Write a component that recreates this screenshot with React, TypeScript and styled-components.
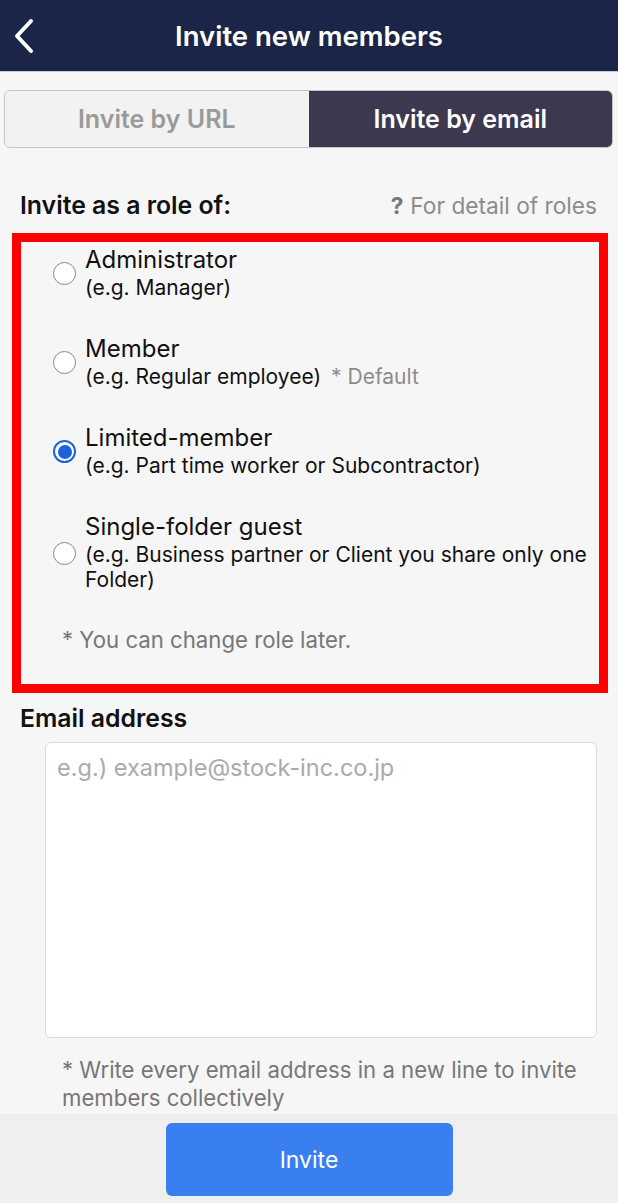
import styled, { createGlobalStyle } from 'styled-components';

const GlobalStyle = createGlobalStyle`
    html, body {
        margin: 0;
        padding: 0;
        background: #f6f6f6;
        font-family: Inter, Roboto, "Liberation Sans", sans-serif;
    }
`;

const Page = styled.div`
    width: 618px;
    height: 1203px;
    display: flex;
    flex-direction: column;
    background: #f6f6f6;
    overflow: hidden;
`;

const Header = styled.header`
    height: 72px;
    flex-shrink: 0;
    background: #1b2547;
    border-bottom: 1px solid #c9ccd4;
    box-sizing: border-box;
    display: flex;
    align-items: center;
    justify-content: center;
    position: relative;
    color: #fff;
    font-size: 27.5px;
    font-weight: 600;
`;

const BackButton = styled.div`
    position: absolute;
    left: 12px;
    top: 18px;
    width: 24px;
    height: 36px;
    display: flex;
`;

const Content = styled.main`
    flex: 1;
    display: flex;
    flex-direction: column;
    padding-top: 18px;
`;

const Segmented = styled.div`
    display: flex;
    height: 58px;
    margin: 0 5px 0 4px;
    border-radius: 6px;
    overflow: hidden;
    border: 1.5px solid #c4c4c4;
    box-sizing: border-box;
`;

const Segment = styled.div<{ $active?: boolean }>`
    flex: 1;
    display: flex;
    align-items: center;
    justify-content: center;
    font-size: 25px;
    font-weight: 600;
    background: ${p => (p.$active ? '#3c384f' : '#f2f2f2')};
    color: ${p => (p.$active ? '#fff' : '#9a9a9a')};
`;

const SectionHead = styled.div`
    display: flex;
    justify-content: space-between;
    align-items: center;
    height: 30px;
    padding: 0 21px 0 20px;
    margin-top: 42px;
`;

const Label = styled.div`
    font-size: 24.8px;
    line-height: 30px;
    font-weight: 600;
    color: #111;
`;

const DetailLink = styled.div`
    font-size: 22.7px;
    color: #8c8c8c;
    display: flex;
    align-items: center;
    gap: 7px;
    span {
        font-weight: 700;
        color: #777;
    }
`;

const RoleBox = styled.div`
    margin: 13px 10px 0 12px;
    border: 9px solid #ff0000;
    padding: 3px 4px 30px 32px;
    display: flex;
    flex-direction: column;
`;

const RoleRow = styled.label`
    display: flex;
    align-items: flex-start;
    gap: 9px;
    padding-bottom: 34px;
`;

const Radio = styled.span<{ $checked?: boolean; $offset: number }>`
    flex-shrink: 0;
    width: 23px;
    height: 23px;
    box-sizing: border-box;
    border-radius: 50%;
    border: ${p => (p.$checked ? '2px solid #1a62d8' : '1.5px solid #8a8a8a')};
    background: #fff;
    margin-top: ${p => p.$offset}px;
    display: flex;
    align-items: center;
    justify-content: center;
    &::after {
        content: '';
        display: ${p => (p.$checked ? 'block' : 'none')};
        width: 14px;
        height: 14px;
        border-radius: 50%;
        background: #1a62d8;
    }
`;

const RoleText = styled.div`
    display: flex;
    flex-direction: column;
    color: #111;
`;

const RoleTitle = styled.div`
    font-size: 24px;
    line-height: 30px;
`;

const RoleSub = styled.div`
    font-size: 21px;
    line-height: 25px;
`;

const Muted = styled.span`
    color: #8c8c8c;
    margin-left: 10px;
`;

const Note = styled.div<{ $indent: number }>`
    font-size: 22.2px;
    line-height: 28px;
    color: #777;
    padding-left: ${p => p.$indent}px;
`;

const EmailLabel = styled(Label)`
    margin: 10px 0 0 20px;
`;

const EmailBox = styled.textarea`
    margin: 9px 21px 0 45px;
    height: 296px;
    box-sizing: border-box;
    resize: none;
    border: 1.5px solid #dcdcdc;
    border-radius: 6px;
    background: #fff;
    padding: 10px 11px;
    font-family: inherit;
    font-size: 23.5px;
    line-height: 29px;
    color: #111;
    outline: none;
    &::placeholder {
        color: #aaa;
    }
`;

const HintWrap = styled.div`
    margin-top: 18px;
`;

const Footer = styled.footer`
    height: 89px;
    flex-shrink: 0;
    background: #efefef;
    display: flex;
    justify-content: center;
    padding-top: 9px;
    box-sizing: border-box;
`;

const InviteButton = styled.button`
    width: 287px;
    height: 73px;
    border: none;
    border-radius: 6px;
    background: #3a7ff0;
    color: #fff;
    font-family: inherit;
    font-size: 23px;
`;

const roles = [
    { title: 'Administrator', sub: '(e.g. Manager)', offset: 17 },
    { title: 'Member', sub: '(e.g. Regular employee)', extra: '* Default', offset: 17 },
    { title: 'Limited-member', sub: '(e.g. Part time worker or Subcontractor)', offset: 17, checked: true },
    {
        title: 'Single-folder guest',
        sub: '(e.g. Business partner or Client you share only one Folder)',
        offset: 30,
    },
];

const App = () => {
    return (
        <Page>
            <GlobalStyle />
            <Header>
                <BackButton>
                    <svg width="24" height="36" viewBox="0 0 24 36">
                        <path d="M19 3 L5 18 L19 33" fill="none" stroke="#fff" strokeWidth="4" strokeLinecap="round" strokeLinejoin="round" />
                    </svg>
                </BackButton>
                Invite new members
            </Header>
            <Content>
                <Segmented>
                    <Segment>Invite by URL</Segment>
                    <Segment $active>Invite by email</Segment>
                </Segmented>
                <SectionHead>
                    <Label>Invite as a role of:</Label>
                    <DetailLink>
                        <span>?</span>For detail of roles
                    </DetailLink>
                </SectionHead>
                <RoleBox>
                    {roles.map(r => (
                        <RoleRow key={r.title}>
                            <Radio $checked={r.checked} $offset={r.offset} />
                            <RoleText>
                                <RoleTitle>{r.title}</RoleTitle>
                                <RoleSub>
                                    {r.sub}
                                    {r.extra && <Muted>{r.extra}</Muted>}
                                </RoleSub>
                            </RoleText>
                        </RoleRow>
                    ))}
                    <Note $indent={9}>* You can change role later.</Note>
                </RoleBox>
                <EmailLabel>Email address</EmailLabel>
                <EmailBox placeholder="e.g.) example@stock-inc.co.jp" />
                <HintWrap>
                    <Note $indent={62}>
                        * Write every email address in a new line to invite
                        <br />
                        members collectively
                    </Note>
                </HintWrap>
            </Content>
            <Footer>
                <InviteButton>Invite</InviteButton>
            </Footer>
        </Page>
    );
};

export default App;
